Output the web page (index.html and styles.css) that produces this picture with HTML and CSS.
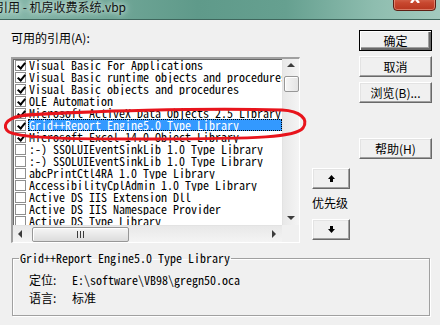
FILE: index.html
```html
<!DOCTYPE html>
<html lang="zh-CN">
<head>
  <meta charset="UTF-8">
  <title>引用 - 机房收费系统.vbp</title>
  <link rel="stylesheet" href="styles.css">
</head>
<body>
  <div class="window">
    <div class="titlebar">
      <span class="title">引用 - 机房收费系统.vbp</span>
      <div class="close">
        <svg width="12" height="10" viewBox="0 0 12 10"><path d="M2 0 L10 10 M10 0 L2 10" stroke="#fff" stroke-width="2.4"/></svg>
      </div>
    </div>

    <div class="dialog">
      <div class="top">
        <div class="refs">
          <div class="caption">可用的引用(A):</div>
          <div class="listbox">
            <div class="items">
              <div class="row"><i class="box checked"></i><span class="name">Visual Basic For Applications</span></div>
              <div class="row"><i class="box checked"></i><span class="name">Visual Basic runtime objects and procedures</span></div>
              <div class="row"><i class="box checked"></i><span class="name">Visual Basic objects and procedures</span></div>
              <div class="row"><i class="box checked"></i><span class="name">OLE Automation</span></div>
              <div class="row"><i class="box checked"></i><span class="name">Microsoft ActiveX Data Objects 2.5 Library</span></div>
              <div class="row selected"><i class="box checked"></i><span class="name">Grid++Report Engine5.0 Type Library</span></div>
              <div class="row"><i class="box checked"></i><span class="name">Microsoft Excel 14.0 Object Library</span></div>
              <div class="row"><i class="box"></i><span class="name">:-) SSOLUIEventSinkLib 1.0 Type Library</span></div>
              <div class="row"><i class="box"></i><span class="name">:-) SSOLUIEventSinkLib 1.0 Type Library</span></div>
              <div class="row"><i class="box"></i><span class="name">abcPrintCtl4RA 1.0 Type Library</span></div>
              <div class="row"><i class="box"></i><span class="name">AccessibilityCplAdmin 1.0 Type Library</span></div>
              <div class="row"><i class="box"></i><span class="name">Active DS IIS Extension Dll</span></div>
              <div class="row"><i class="box"></i><span class="name">Active DS IIS Namespace Provider</span></div>
              <div class="row"><i class="box"></i><span class="name">Active DS Type Library</span></div>
            </div>
            <div class="vscroll">
              <span class="arrow up"></span>
              <span class="vthumb"></span>
              <span class="arrow down"></span>
            </div>
            <div class="hscroll">
              <span class="arrow left"></span>
              <span class="hthumb">
                <svg width="7" height="7" viewBox="0 0 7 7"><path d="M0.5 0 V7 M3.5 0 V7 M6.5 0 V7" stroke="#3c3c3c" stroke-width="1"/></svg>
              </span>
              <span class="arrow right"></span>
            </div>
            <div class="corner"></div>
          </div>
        </div>

        <div class="priority">
          <button class="btn small">
            <svg width="7" height="7" viewBox="0 0 7 7"><polygon points="3.5,0 7,4 5,4 5,7 2,7 2,4 0,4" fill="#000"/></svg>
          </button>
          <div class="prio-label">优先级</div>
          <button class="btn small">
            <svg width="7" height="7" viewBox="0 0 7 7"><polygon points="3.5,7 7,3 5,3 5,0 2,0 2,3 0,3" fill="#000"/></svg>
          </button>
        </div>

        <div class="actions">
          <button class="btn default">确定</button>
          <button class="btn">取消</button>
          <button class="btn">浏览(B)...</button>
          <button class="btn help">帮助(H)</button>
        </div>
      </div>

      <fieldset class="info">
        <legend>Grid++Report Engine5.0 Type Library</legend>
        <div class="info-body">
          <div class="info-row"><span class="key">定位:</span><span class="mono">E:\software\VB98\gregn50.oca</span></div>
          <div class="info-row"><span class="key">语言:</span><span>标准</span></div>
        </div>
      </fieldset>
    </div>

    <!-- red hand-drawn mark around the selected reference -->
    <svg class="mark" width="440" height="325" viewBox="0 0 440 325">
      <path d="M24 115 C90 111 200 108 282 110 C300 111 309 119 303 128 C296 137 262 139 150 139 C80 139 24 139 9 132 C2 127 5 119 20 116 C34 114 60 113 92 112" fill="none" stroke="#e8141c" stroke-width="3" stroke-linecap="round"/>
    </svg>
  </div>
</body>
</html>
```

FILE: styles.css
```css
* {
  box-sizing: border-box;
}

body {
  margin: 0;
  background: #f0f0f0;
  font-family: "Noto Sans CJK SC", sans-serif;
  font-size: 12px;
  color: #000;
}

.window {
  position: relative;
  width: 440px;
  height: 325px;
  overflow: hidden;
}

/* title bar (cropped at the top) */
.titlebar {
  display: flex;
  height: 20px;
  border-bottom: 1px solid #3f675d;
  background: linear-gradient(to right, #88b8aa 0%, #74a99a 20%, #5f9a8a 45%, #66a090 65%, #8ebdaf 85%, #a3cabe 100%);
}

.title {
  margin-left: -4px;
  font-size: 12px;
  line-height: 14px;
  color: #111;
  text-shadow: 0 0 5px #d6ece5, 0 0 9px #d6ece5;
}

.close {
  display: flex;
  justify-content: center;
  align-items: flex-end;
  margin-left: auto;
  margin-right: 4px;
  margin-top: -7px;
  width: 43px;
  height: 18px;
  border: 1px solid #5e1f14;
  border-radius: 0 0 4px 4px;
  background: linear-gradient(#e2856e, #c8482f 55%, #b8361f);
  box-shadow: inset 0 0 0 1px rgba(255, 200, 180, 0.45);
}

.close svg {
  margin-bottom: 7px;
}

/* dialog body */
.top {
  display: flex;
  padding-left: 11px;
}

.refs {
  width: 289px;
  padding-top: 10px;
}

.caption {
  height: 16px;
  line-height: 16px;
}

.listbox {
  display: grid;
  grid-template-columns: 1fr 17px;
  grid-template-rows: 1fr 17px;
  margin-top: 11px;
  height: 186px;
  background: #fff;
  border-top: 2px solid #a0a0a0;
  border-left: 2px solid #a0a0a0;
  border-right: 1px solid #fff;
  border-bottom: 1px solid #fff;
  box-shadow: inset 1px 1px #696969;
}

.items {
  overflow: hidden;
  white-space: nowrap;
  padding-top: 0;
}

.row {
  display: flex;
  align-items: center;
  height: 12px;
}

.box {
  position: relative;
  flex: none;
  width: 11px;
  height: 11px;
  margin: 0 2px 0 2px;
  border: 1px solid #8f8f8f;
  background: #fff;
}

.box.checked::after {
  content: "";
  position: absolute;
  left: 3px;
  top: 0;
  width: 3px;
  height: 6px;
  border-right: 2px solid #000;
  border-bottom: 2px solid #000;
  transform: rotate(40deg);
}

.name {
  flex: 1;
  padding-left: 1px;
  height: 12px;
  font-family: "Noto Sans Mono CJK SC", "Liberation Mono", monospace;
  font-size: 12px;
  line-height: 12px;
  overflow: hidden;
}

.selected .name {
  background: #3399ff;
  color: #fff;
  outline: 1px dotted #000;
  outline-offset: -1px;
}

/* scroll bars */
.vscroll,
.hscroll {
  position: relative;
  display: flex;
  align-items: center;
  background: linear-gradient(to right, #e8e8e8, #f4f4f4);
}

.vscroll {
  flex-direction: column;
  border-left: 1px solid #e3e3e3;
}

.hscroll {
  background: linear-gradient(#e8e8e8, #f4f4f4);
  border-top: 1px solid #e3e3e3;
}

.arrow {
  flex: none;
  width: 0;
  height: 0;
  border: 4px solid transparent;
}

.arrow.up {
  margin-top: 4px;
  border-bottom: 4px solid #3c3c3c;
  border-top: 0;
}

.arrow.down {
  margin-top: auto;
  margin-bottom: 5px;
  border-top: 4px solid #3c3c3c;
  border-bottom: 0;
}

.arrow.left {
  margin-left: 5px;
  border-right: 4px solid #3c3c3c;
  border-left: 0;
}

.arrow.right {
  margin-left: auto;
  margin-right: 6px;
  border-left: 4px solid #3c3c3c;
  border-right: 0;
}

.vthumb {
  margin-top: 9px;
  width: 15px;
  height: 16px;
  border: 1px solid #979797;
  border-radius: 2px;
  background: linear-gradient(to right, #f6f6f6, #e4e4e4);
  box-shadow: inset 1px 1px #fff;
}

.hthumb {
  display: flex;
  justify-content: center;
  align-items: center;
  margin-left: 10px;
  width: 97px;
  height: 15px;
  border: 1px solid #979797;
  border-radius: 2px;
  background: linear-gradient(#f6f6f6, #dcdcdc);
  box-shadow: inset 1px 1px #fff;
}

.corner {
  background: #f0f0f0;
}

/* buttons */
.btn {
  display: flex;
  justify-content: center;
  align-items: center;
  padding: 0;
  width: 73px;
  height: 21px;
  background: #f0f0f0;
  border: 1px solid;
  border-color: #fff #696969 #696969 #fff;
  box-shadow: inset -1px -1px #a0a0a0, inset 1px 1px #e3e3e3;
  font-family: "Noto Sans CJK SC", sans-serif;
  font-size: 12px;
  line-height: 19px;
  color: #000;
}

.btn.default {
  border: 1px solid #000;
  box-shadow: inset 1px 1px #fff, inset -2px -2px #696969, inset -3px -3px #a0a0a0;
}

.priority {
  display: flex;
  flex-direction: column;
  margin-left: 12px;
  width: 38px;
  padding-top: 148px;
}

.btn.small {
  width: 38px;
}

.prio-label {
  margin: 6px 0 8px;
  line-height: 16px;
  white-space: nowrap;
}

.actions {
  display: flex;
  flex-direction: column;
  gap: 5px;
  margin-left: 9px;
  padding-top: 10px;
}

.btn.help {
  margin-top: 30px;
}

/* group box */
.info {
  margin: 9px 0 0 12px;
  padding: 0 0 8px 6px;
  width: 418px;
  border: 1px solid #a0a0a0;
  box-shadow: 1px 1px #fff, inset 1px 1px #fff;
}

.info legend {
  padding: 0 1px;
  font-family: "Noto Sans Mono CJK SC", "Liberation Mono", monospace;
  font-size: 12px;
  line-height: 12px;
}

.info-body {
  padding: 7px 0 0 10px;
}

.info-row {
  display: flex;
  height: 18px;
  line-height: 18px;
}

.key {
  width: 43px;
}

.mono {
  font-family: "Noto Sans Mono CJK SC", "Liberation Mono", monospace;
}

.mark {
  position: absolute;
  left: 0;
  top: 0;
  pointer-events: none;
}
```
